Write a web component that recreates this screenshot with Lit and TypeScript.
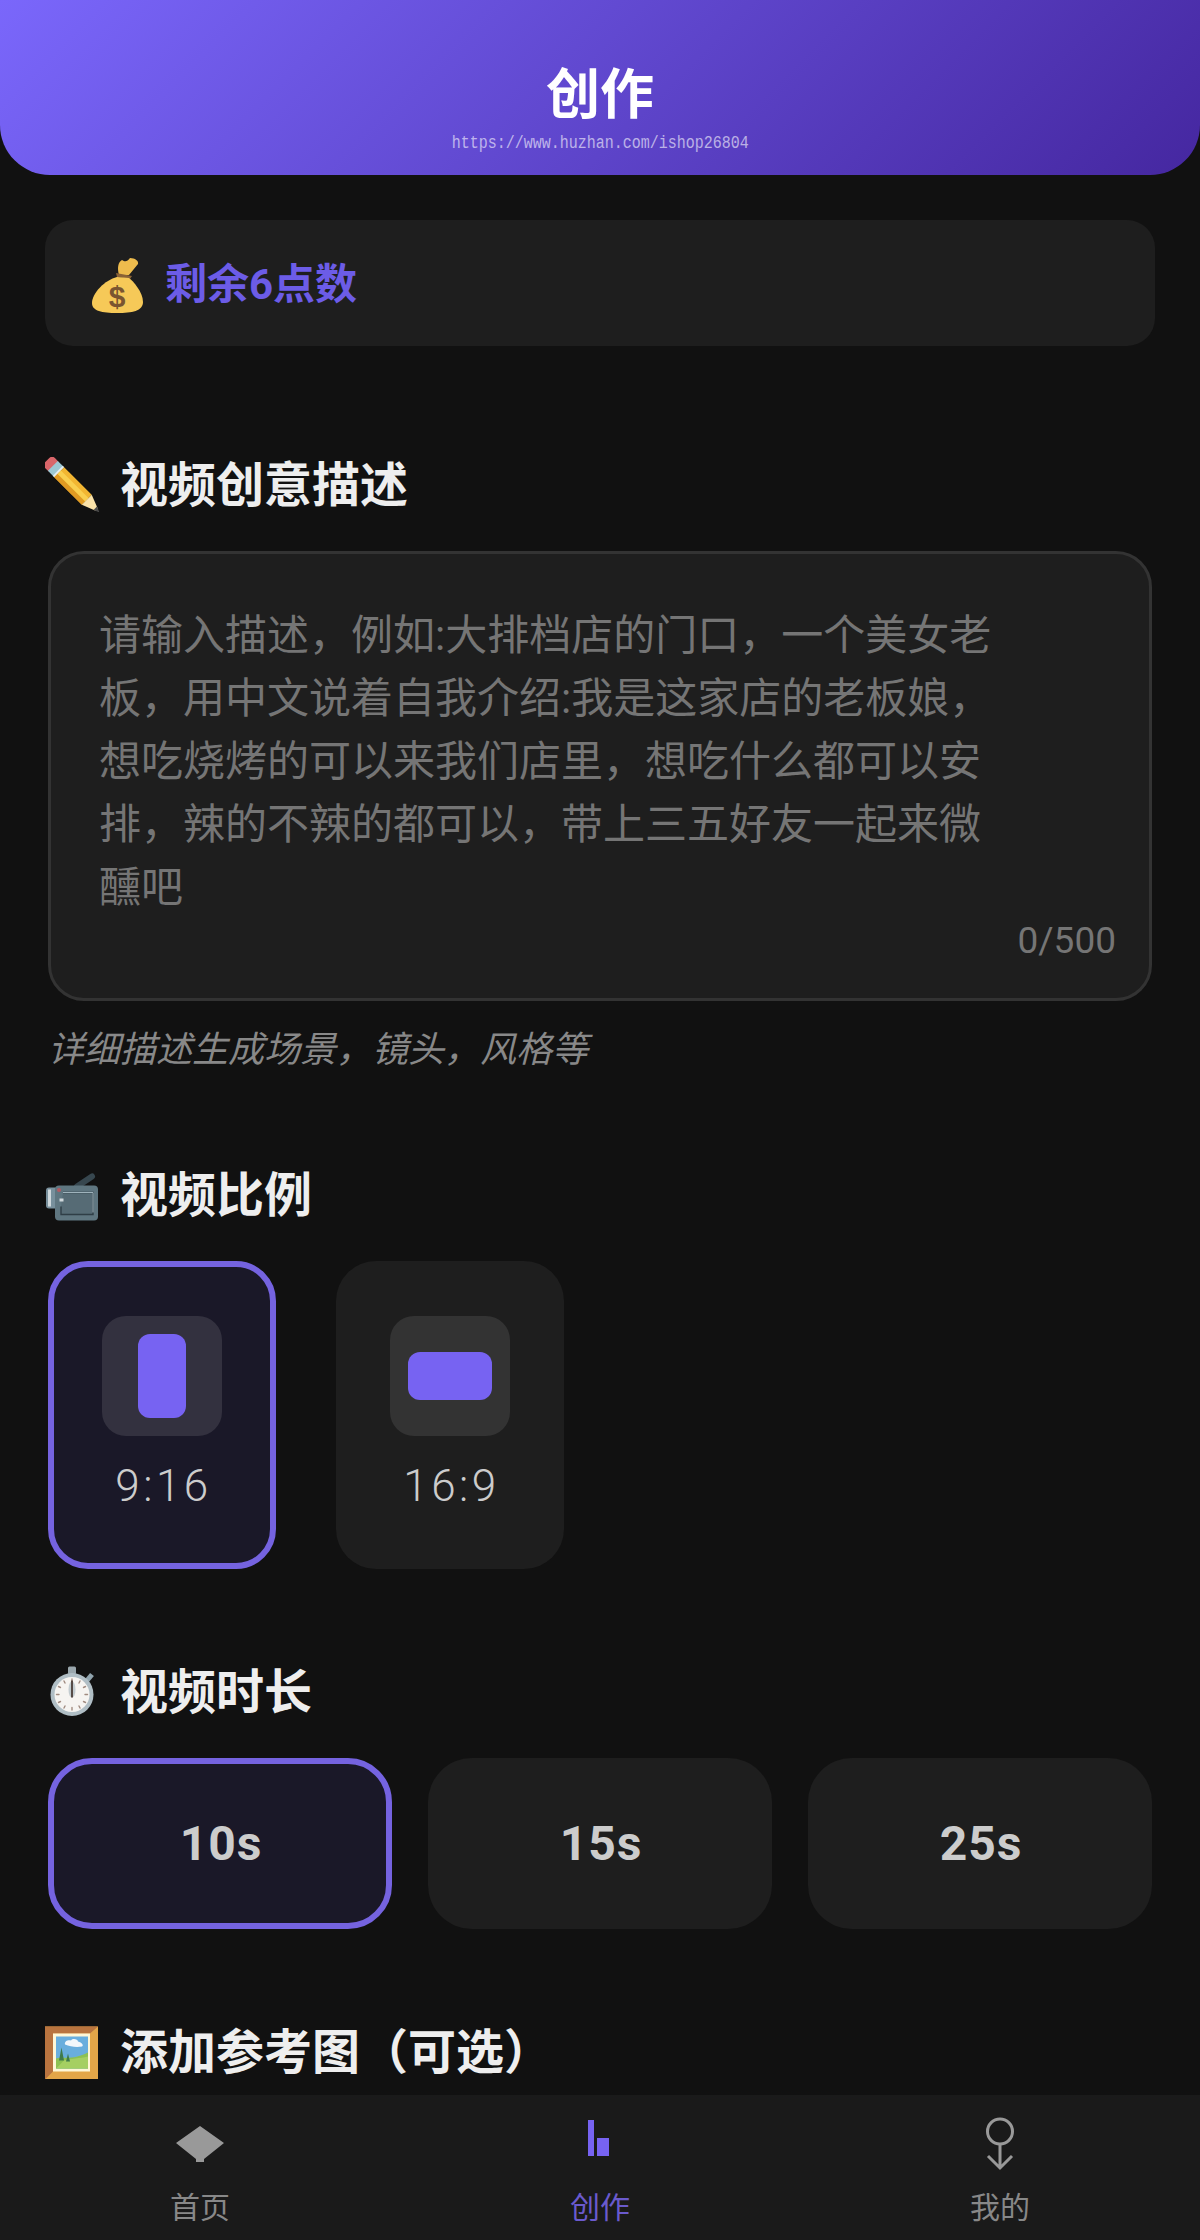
import { LitElement, html, css, svg } from 'lit';
import { customElement, state } from 'lit/decorators.js';

const moneyBag = html`<svg class="bag" width="70" height="70" viewBox="0 -2 70 70">
  <path d="M39 25 C37 18 38 12 42 10 C45 12 47 12 50 8 C55 8 59 11 58 14 C55 18 52 21 49 25 Z" fill="#eebc4d"/>
  <path d="M36 23 L52 26 L50 29 L37 27 Z" fill="#8a6236"/>
  <path d="M37 27 C25 30 12 43 12 53 C12 61 22 63 37 63 C52 63 63 61 63 52 C63 42 53 31 49 28 Z" fill="#f6c958"/>
  <text x="37" y="57" text-anchor="middle" font-family="Liberation Sans" font-weight="700" font-size="30" fill="#7a5530">$</text>
</svg>`;

const pencil = html`<svg width="55" height="55" viewBox="0 0 55 55">
  <g transform="translate(5 6) rotate(45)">
    <rect x="-4" y="-7" width="12" height="14" rx="4" fill="#d9666a"/>
    <rect x="4" y="-7" width="9" height="14" fill="#9cc7d3"/>
    <rect x="11" y="-7" width="2" height="14" fill="#e8eef0"/>
    <rect x="13" y="-7" width="39" height="14" fill="#f2b632"/>
    <rect x="13" y="-2.4" width="39" height="4.8" fill="#f9cf4f"/>
    <rect x="13" y="2.4" width="39" height="4.6" fill="#e09a23"/>
    <path d="M52 -7 L66 -1.5 L66 1.5 L52 7 Z" fill="#fbe3a9"/>
    <path d="M64 -2.4 L70 0 L64 2.4 Z" fill="#4a4a4a"/>
  </g>
</svg>`;

const camera = html`<svg width="55" height="55" viewBox="5 1.5 55 55">
  <path d="M37 21 L52 11" stroke="#37474f" stroke-width="6" stroke-linecap="round"/>
  <rect x="6" y="22" width="12" height="21" rx="3" fill="#78909c"/>
  <rect x="8" y="24" width="3" height="17" fill="#cfd8dc"/>
  <rect x="15" y="20" width="43" height="35" rx="4" fill="#5f7680"/>
  <path d="M23 27 H53 V49 H21 V41" fill="#566b75" stroke="#2f3e46" stroke-width="1.4"/>
  <path d="M23 27 H53 V47" fill="none" stroke="#9fb3bc" stroke-width="1"/>
  <circle cx="19" cy="24.5" r="2" fill="#b45a62"/>
  <rect x="19.5" y="33" width="4" height="3" fill="#cfd8dc"/>
</svg>`;

const stopwatch = html`<svg width="55" height="55" viewBox="5 3.5 55 55">
  <rect x="28" y="6" width="8" height="8" rx="1.5" fill="#9aa7ad"/>
  <path d="M47 20 L52 14" stroke="#90a4ae" stroke-width="5"/>
  <circle cx="32" cy="34" r="21.5" fill="#b0bec5"/>
  <circle cx="32" cy="34" r="17.5" fill="#f6f4f1"/>
  <g stroke="#a18b80" stroke-width="1.4" stroke-linecap="round">
    <path d="M32 18.5V21M32 47V49.5M16.5 34H19M45 34H47.5M24 20.5L25 22.5M39 45.5L40 47.5M40 20.5L39 22.5M25 45.5L24 47.5M18.5 26L20.5 27M43.5 41L45.5 42M45.5 26L43.5 27M20.5 41L18.5 42"/>
  </g>
  <ellipse cx="32" cy="29" rx="3.5" ry="8" fill="#c3ccd0"/>
  <path d="M32 20V37" stroke="#4a3d38" stroke-width="1.8"/>
</svg>`;

const framedPicture = html`<svg width="55" height="55" viewBox="5 3.5 55 55">
  <rect x="5" y="6" width="53" height="53" fill="#e3a648"/>
  <path d="M5 6 H58 L50 13 H13 V51 L5 59 Z" fill="#b9743f"/>
  <rect x="13" y="13" width="37" height="38" fill="#fff7d6"/>
  <rect x="16" y="16" width="32" height="32" fill="#69aedd"/>
  <path d="M16 38 C24 36 32 40 48 32 V48 H16 Z" fill="#8cc152"/>
  <path d="M24 40 C30 38 40 38 48 36 V48 H16 Z" fill="#a5cf62"/>
  <path d="M19 40 L21.5 27 L24 40 Z M26 41 L28 33 L30 41 Z" fill="#3f7a4a"/>
  <path d="M25 24 C24 20 29 19 31 20 C33 17 38 19 38 21 C42 22 44 25 42 26 C36 27 30 26 25 24 Z" fill="#f2f7fb"/>
</svg>`;

const homeIcon = svg`<path d="M30 14 L54 31 L34 47 V50 H26 V47 L6 31 Z" fill="#999"/>`;
const createIcon = svg`<rect x="18" y="8" width="6" height="36" fill="#7763f2"/><rect x="27" y="26" width="12" height="18" fill="#7763f2"/>`;
const profileIcon = svg`<g fill="none" stroke="#999" stroke-width="3"><circle cx="30" cy="19.5" r="12.5"/><path d="M30 32 V56 M18 44 L30 56 L42 44"/></g>`;

const PLACEHOLDER =
  '请输入描述，例如:大排档店的门口，一个美女老板，用中文说着自我介绍:我是这家店的老板娘，想吃烧烤的可以来我们店里，想吃什么都可以安排，辣的不辣的都可以，带上三五好友一起来微醺吧';

@customElement('app-root')
export class AppRoot extends LitElement {
  @state() ratio = '9:16';
  @state() duration = '10s';

  static styles = css`
    :host {
      display: flex;
      flex-direction: column;
      height: 2240px;
      background: #111;
      color: #eee;
      font-family: Roboto, "Noto Sans CJK SC", sans-serif;
      overflow: hidden;
    }

    .header {
      flex: none;
      height: 175px;
      box-sizing: border-box;
      padding-bottom: 22px;
      display: flex;
      flex-direction: column;
      align-items: center;
      justify-content: flex-end;
      border-radius: 0 0 50px 50px;
      background: linear-gradient(135deg, #7a67fb, #4527a0);
    }
    .header h1 {
      margin: 0 0 6px;
      font-size: 54px;
      line-height: 62px;
      font-weight: 700;
      color: #fff;
    }
    .watermark {
      font-family: "Liberation Mono", monospace;
      font-size: 18px;
      line-height: 20px;
      color: rgba(255, 255, 255, 0.6);
      transform: scaleX(0.833);
    }

    .content {
      flex: 1;
      min-height: 0;
      overflow: hidden;
      padding: 45px 45px 0;
    }

    .points {
      height: 126px;
      display: flex;
      align-items: center;
      gap: 15px;
      padding-left: 35px;
      border-radius: 28px;
      background: #1e1e1e;
      font-size: 42px;
      font-weight: 700;
      color: #6c5ce7;
      box-sizing: border-box;
    }
    .points span { margin-bottom: 6px; }

    section { margin-top: 92px; }
    section.first { margin-top: 108px; }

    .title {
      display: flex;
      align-items: center;
      gap: 20px;
      height: 60px;
      margin-bottom: 37px;
      font-size: 48px;
      font-weight: 700;
      color: #eee;
    }
    .title svg { flex: none; }
    .title span { margin-bottom: 6px; }

    .field {
      position: relative;
      margin: 0 3px;
    }
    textarea {
      display: block;
      width: 100%;
      height: 450px;
      box-sizing: border-box;
      padding: 50px 140px 0 48px;
      border: 3px solid #333;
      border-radius: 36px;
      outline: none;
      resize: none;
      background: #1e1e1e;
      color: #eee;
      font: 42px/63px Roboto, "Noto Sans CJK SC", sans-serif;
    }
    textarea::placeholder { color: #757575; opacity: 1; }
    .count {
      position: absolute;
      right: 36px;
      bottom: 37px;
      font-size: 37px;
      line-height: 46px;
      color: #757575;
    }
    .hint {
      margin: 28px 3px 0;
      font-size: 36px;
      line-height: 43px;
      font-style: italic;
      color: #888;
    }

    .ratios {
      display: flex;
      gap: 60px;
      padding-left: 3px;
    }
    .ratio {
      width: 228px;
      height: 308px;
      box-sizing: border-box;
      padding-top: 49px;
      border: 6px solid transparent;
      border-radius: 40px;
      background: #1e1e1e;
      display: flex;
      flex-direction: column;
      align-items: center;
      cursor: pointer;
    }
    .ratio .frame {
      width: 120px;
      height: 120px;
      display: flex;
      align-items: center;
      justify-content: center;
      border-radius: 24px;
      background: #333;
    }
    .ratio .shape {
      border-radius: 12px;
      background: #7763f2;
    }
    .ratio .label {
      margin-top: 22px;
      padding-left: 3px;
      font-size: 44px;
      line-height: 56px;
      letter-spacing: 3.5px;
      font-weight: 300;
      color: #ccc;
    }
    .ratio.active, .duration.active {
      border-color: #7563e0;
      background: #1a1828;
    }
    .ratio.active .frame { background: #33313f; }

    .durations {
      display: flex;
      gap: 36px;
      margin: 0 3px;
    }
    .duration {
      flex: 1;
      height: 171px;
      box-sizing: border-box;
      padding-left: 2px;
      border: 6px solid transparent;
      border-radius: 44px;
      background: #1e1e1e;
      display: flex;
      align-items: center;
      justify-content: center;
      font-size: 48px;
      font-weight: 700;
      letter-spacing: 1px;
      color: #ccc;
      cursor: pointer;
    }

    .nav {
      flex: none;
      height: 145px;
      box-sizing: border-box;
      padding-top: 17px;
      display: grid;
      grid-template-columns: repeat(3, 1fr);
      background: #1a1a1a;
    }
    .nav-item {
      display: flex;
      flex-direction: column;
      align-items: center;
      gap: 16px;
      font-size: 30px;
      line-height: 40px;
      color: #888;
    }
    .nav-item.active { color: #6a5acd; }
  `;

  private navItem(label: string, icon: unknown, active = false) {
    return html`<div class="nav-item ${active ? 'active' : ''}">
      <svg width="60" height="60" viewBox="0 0 60 60">${icon}</svg>
      <span>${label}</span>
    </div>`;
  }

  render() {
    const ratios = [
      { value: '9:16', w: 48, h: 84 },
      { value: '16:9', w: 84, h: 48 },
    ];
    return html`
      <header class="header">
        <h1>创作</h1>
        <div class="watermark">https://www.huzhan.com/ishop26804</div>
      </header>

      <main class="content">
        <div class="points">${moneyBag}<span>剩余6点数</span></div>

        <section class="first">
          <div class="title">${pencil}<span>视频创意描述</span></div>
          <div class="field">
            <textarea maxlength="500" placeholder=${PLACEHOLDER}></textarea>
            <div class="count">0/500</div>
          </div>
          <div class="hint">详细描述生成场景，镜头，风格等</div>
        </section>

        <section>
          <div class="title">${camera}<span>视频比例</span></div>
          <div class="ratios">
            ${ratios.map(
              (r) => html`<div
                class="ratio ${this.ratio === r.value ? 'active' : ''}"
                @click=${() => (this.ratio = r.value)}
              >
                <div class="frame">
                  <div class="shape" style="width:${r.w}px;height:${r.h}px"></div>
                </div>
                <div class="label">${r.value}</div>
              </div>`
            )}
          </div>
        </section>

        <section>
          <div class="title">${stopwatch}<span>视频时长</span></div>
          <div class="durations">
            ${['10s', '15s', '25s'].map(
              (d) => html`<div
                class="duration ${this.duration === d ? 'active' : ''}"
                @click=${() => (this.duration = d)}
              >${d}</div>`
            )}
          </div>
        </section>

        <section>
          <div class="title">${framedPicture}<span>添加参考图（可选）</span></div>
        </section>
      </main>

      <nav class="nav">
        ${this.navItem('首页', homeIcon)}
        ${this.navItem('创作', createIcon, true)}
        ${this.navItem('我的', profileIcon)}
      </nav>
    `;
  }
}
